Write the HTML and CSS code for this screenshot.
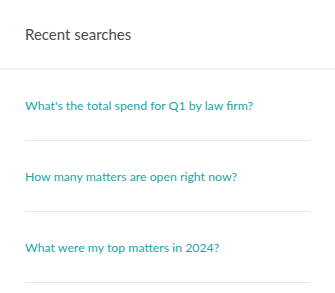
FILE: index.html
```html
<!DOCTYPE html>
<html>
<head>
    <title>Recent searches</title>
    <meta name="viewport" content="width=device-width, initial-scale=1.0">
    <link rel="stylesheet" href="styles.css">
</head>
<body>
    <div class="panel">
        <div class="panel-header">Recent searches</div>
        <ul class="search-list">
            <li><a href="#">What's the total spend for Q1 by law firm?</a></li>
            <li><a href="#">How many matters are open right now?</a></li>
            <li><a href="#">What were my top matters in 2024?</a></li>
        </ul>
    </div>
</body>
</html>
```

FILE: styles.css
```css
body {
    font-family: Lato, 'Open Sans', sans-serif;
    background: #fff;
    margin: 0;
}
.panel {
    width: 335px;
}
.panel-header {
    height: 70px;
    padding-left: 25px;
    display: flex;
    align-items: center;
    font-size: 15px;
    color: #4a4a4a;
    border-bottom: 2px solid #f0f0f0;
    box-sizing: border-box;
}
.search-list {
    list-style: none;
    margin: 0;
    padding: 0 25px;
}
.search-list li {
    height: 71px;
    display: flex;
    align-items: center;
    border-bottom: 1px solid #e6e6e6;
    box-sizing: border-box;
}
.search-list a {
    color: #1aa6a6;
    text-decoration: none;
    font-size: 12.3px;
}
```
